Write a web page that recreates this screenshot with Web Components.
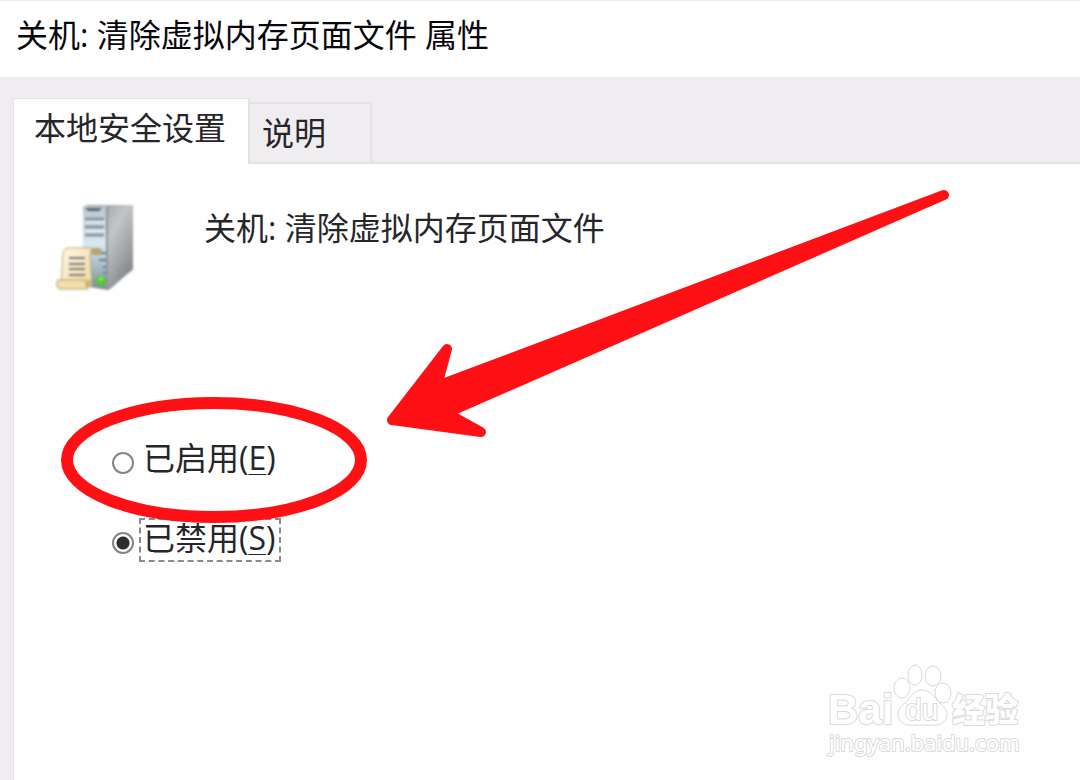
<!DOCTYPE html>
<html lang="zh-CN">
<head>
<meta charset="utf-8">
<meta name="viewport" content="width=device-width, initial-scale=1">
<title>关机: 清除虚拟内存页面文件 属性</title>
<style>
  body { margin: 0; font: 32px/44px "Open Sans", "Noto Sans CJK SC", sans-serif; color: #26262a; background: #efedf0; }
</style>
</head>
<body>
<property-window>
  <span slot="title">关机: 清除虚拟内存页面文件 属性</span>
  <tab-strip slot="tabs"></tab-strip>
  <policy-panel>
    <server-icon slot="icon"></server-icon>
    <span slot="name">关机: 清除虚拟内存页面文件</span>
    <radio-choices slot="choices"></radio-choices>
    <hint-overlay slot="overlay"></hint-overlay>
  </policy-panel>
  <site-watermark slot="mark"></site-watermark>
</property-window>

<script>
const define = (name, html) => customElements.define(name, class extends HTMLElement {
  constructor() {
    super();
    this.attachShadow({ mode: "open" }).innerHTML = html;
  }
});

define("property-window", `
  <style>
    :host { display: flex; flex-direction: column; min-height: 100vh; position: relative; overflow: hidden; }
    header { background: #fff; padding: 12px 16px 20px; border-top: 1px solid #ececec; color: #08080c; }
    h1 { margin: 0; font: inherit; }
    main { flex: 1; display: flex; flex-direction: column; padding: 21px 0 0 13px; }
    .body { flex: 1; display: flex; flex-direction: column; }
  </style>
  <header><h1><slot name="title"></slot></h1></header>
  <main>
    <slot name="tabs"></slot>
    <div class="body"><slot></slot></div>
  </main>
  <slot name="mark"></slot>`);

define("tab-strip", `
  <style>
    :host { display: flex; align-items: flex-end; position: relative; z-index: 1; }
    button { font: inherit; color: inherit; margin: 0; text-align: left; border: 2px solid #e4e2e5; border-bottom: 0; background: #efedf0; height: 60px; padding: 0 44px 0 12px; }
    button[aria-selected="true"] { background: #fefefe; height: 66px; padding: 0 22px 8px 20px; margin-bottom: -2px; border-width: 1px 2px 0 1px; }
    button + button { border-left: 0; }
    div { display: flex; align-items: flex-end; }
  </style>
  <div role="tablist">
    <button type="button" role="tab" aria-selected="true">本地安全设置</button>
    <button type="button" role="tab" aria-selected="false">说明</button>
  </div>`);

define("policy-panel", `
  <style>
    :host { flex: 1; display: block; position: relative; background: #fefefe; border: solid #e4e2e5; border-width: 2px 0 0 1px; }
    .head { display: flex; align-items: flex-start; gap: 69px; padding: 40px 20px 0 41px; }
    h2 { margin: 0; font: inherit; padding-top: 2px; }
    .choices { padding: 146px 20px 40px 98px; }
  </style>
  <div class="head">
    <slot name="icon"></slot>
    <h2><slot name="name"></slot></h2>
  </div>
  <div class="choices"><slot name="choices"></slot></div>
  <slot name="overlay"></slot>`);

define("server-icon", `
  <style>
    :host { display: block; filter: blur(1px); }
    svg { display: block; }
  </style>
  <svg width="80" height="88" viewBox="0 0 80 88" aria-hidden="true">
    <defs>
      <linearGradient id="side" x1="0" y1="0" x2="1" y2="1">
        <stop offset="0" stop-color="#858a8f"/><stop offset=".45" stop-color="#c3c6c8"/><stop offset="1" stop-color="#74797e"/>
      </linearGradient>
      <linearGradient id="front" x1="0" y1="0" x2="0" y2="1">
        <stop offset="0" stop-color="#bac6cd"/><stop offset=".45" stop-color="#d8e8f0"/><stop offset="1" stop-color="#788c9b"/>
      </linearGradient>
      <linearGradient id="paper" x1="0" y1="0" x2="1" y2="1">
        <stop offset="0" stop-color="#fff8df"/><stop offset="1" stop-color="#edd89f"/>
      </linearGradient>
    </defs>
    <path d="M28 3l5-2h45v64L54 86l-5-3z" fill="url(#side)"/>
    <path d="M28 2h24l1 84-25-4z" fill="url(#front)"/>
    <path d="M52 3v81" stroke="#8f979d" stroke-width="2"/>
    <path d="M30 4h17l-3 3H33z" fill="#5c666e"/>
    <path d="M30 15h19M30 23h19M30 31h19" stroke="#8a959d" stroke-width="3"/>
    <path d="M30 18h20M30 27h20" stroke="#e4ebef" stroke-width="2"/>
    <path d="M44 49h7M44 56h7M48 63h3M48 69h3" stroke="#657d92" stroke-width="2"/>
    <path d="M62 72l15-10M62 76l15-10M62 67l15-10" stroke="#858a8e" stroke-width="1"/>
    <circle cx="46" cy="77" r="5" fill="#54c733"/>
    <circle cx="46" cy="75" r="2" fill="#8dea65"/>
    <path d="M35 44h9q4 1 2 7h-9z" fill="#b7a56f"/>
    <path d="M6 80l2-30q0-5 5-6h25q-3 2-3 7l2 31z" fill="url(#paper)" stroke="#bea977" stroke-width="1"/>
    <path d="M14 54h16M14 60h16M14 65h16M14 71h16" stroke="#817989" stroke-width="2"/>
    <path d="M3 76h28q-1 5 2 9H4q-4-4-1-9z" fill="#f3dfaa" stroke="#b49e6c" stroke-width="1"/>
    <path d="M31 76h5v6l-4 3q-3-4-1-9z" fill="#cfb779"/>
  </svg>`);

define("radio-choices", `
  <style>
    :host { display: block; }
    fieldset { margin: 0; padding: 0; border: 0; min-width: 0; display: flex; flex-direction: column; align-items: flex-start; gap: 36px; }
    .row { display: flex; align-items: center; gap: 5px; }
    input { appearance: none; box-sizing: border-box; width: 22px; height: 22px; margin: 6px 0 0; border: 2px solid #858588; border-radius: 50%; background: #fff; outline: 0; }
    input:checked { background: radial-gradient(circle, #2e2c30 0 6px, #fff 7px); }
    label { line-height: 36px; padding: 0 4px 4px 2px; border: 2px solid transparent; }
    input:checked + label { border: 2px dashed #8b8b8e; }
    u { text-decoration-thickness: 1px; text-underline-offset: 4px; }
  </style>
  <fieldset aria-label="安全设置">
    <div class="row"><input type="radio" name="state" id="on"><label for="on">已启用(<u>E</u>)</label></div>
    <div class="row"><input type="radio" name="state" id="off" checked><label for="off">已禁用(<u>S</u>)</label></div>
  </fieldset>`);

define("hint-overlay", `
  <style>
    :host { display: block; position: absolute; top: 0; left: 0; pointer-events: none; }
    svg { display: block; }
  </style>
  <svg width="960" height="380" viewBox="14 164 960 380" aria-hidden="true">
    <ellipse cx="214" cy="460" rx="147" ry="57" fill="none" stroke="#ff1014" stroke-width="12"/>
    <path d="M944 195L437 386L447 349L392 420L481 432L447 413Z" fill="#ff1014" stroke="#ff1014" stroke-width="10" stroke-linejoin="round"/>
  </svg>`);

define("site-watermark", `
  <style>
    :host { display: block; position: absolute; right: 56px; bottom: 20px; }
    svg { display: block; overflow: visible; }
    text { fill: #fff; stroke: #dadada; stroke-width: 2px; paint-order: stroke; stroke-linejoin: round; }
    .latin { font: bold 42px/1 "Liberation Sans", sans-serif; }
    .du { font: 30px/1 "Liberation Sans", sans-serif; }
    .cjk { font: 900 33px/1 "Noto Sans CJK SC", sans-serif; }
    .url { font: 22px/1 "Noto Sans", sans-serif; }
    .paw { fill: #fff; stroke: #dadada; stroke-width: 1px; }
  </style>
  <svg width="196" height="96" viewBox="828 664 196 96">
    <text class="latin" x="828" y="724">Bai</text>
    <g class="paw">
      <ellipse cx="902" cy="688" rx="8" ry="10"/>
      <ellipse cx="915" cy="675" rx="7" ry="10"/>
      <ellipse cx="933" cy="676" rx="8" ry="10"/>
      <ellipse cx="943" cy="693" rx="8" ry="10"/>
      <path d="M922 690c-9 0-11 8-17 13-6 5-9 9-6 16 4 8 14 6 23 6s20 2 24-6c3-7-1-11-6-16-6-5-9-13-18-13z"/>
    </g>
    <text class="du" x="905" y="720">du</text>
    <text class="cjk" x="952" y="722">经验</text>
    <text class="url" x="829" y="751">jingyan.baidu.com</text>
  </svg>`);
</script>
</body>
</html>
